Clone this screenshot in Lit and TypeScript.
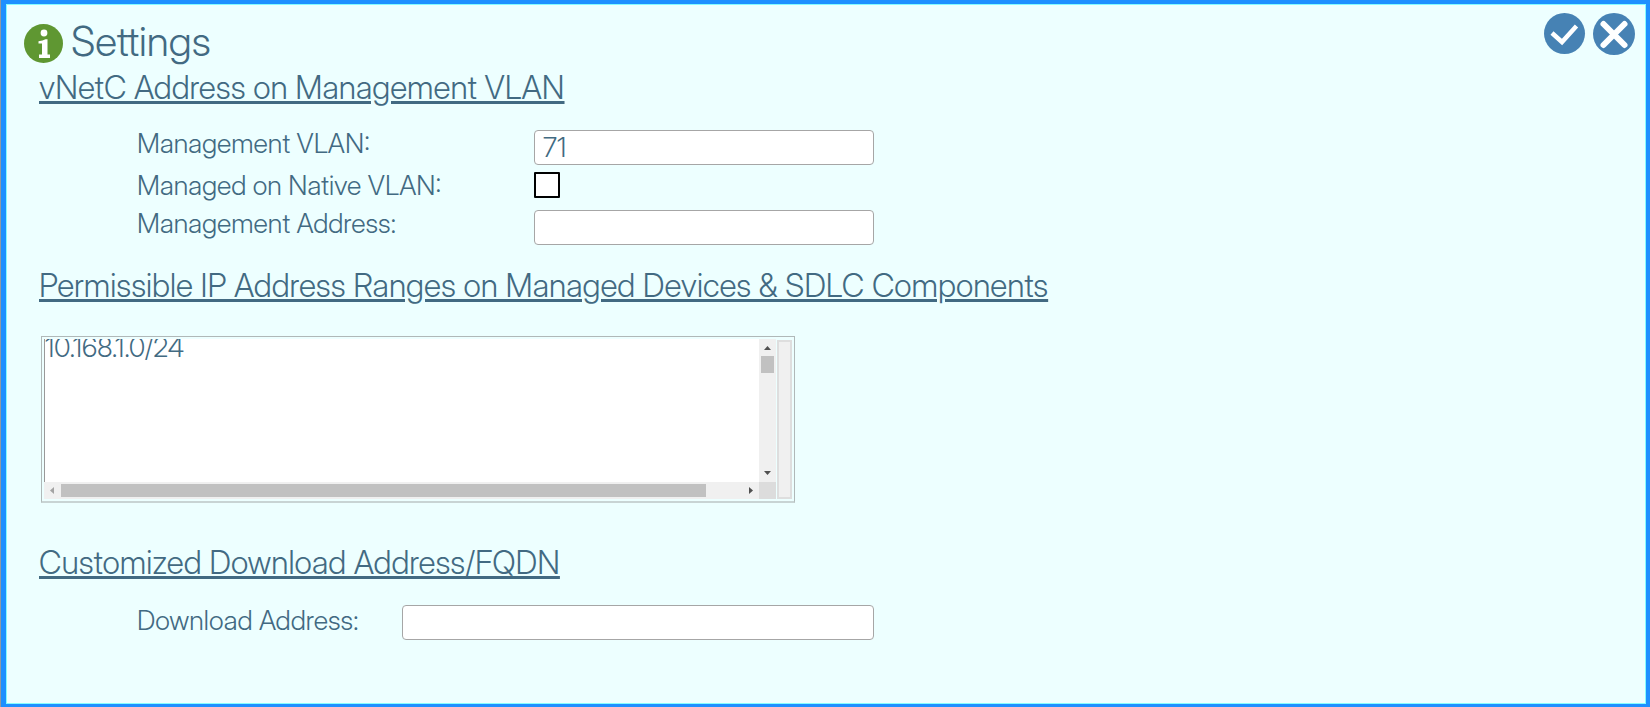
import { LitElement, html, css } from "lit";
import { customElement, state } from "lit/decorators.js";

@customElement("range-list")
class RangeList extends LitElement {
  static styles = css`
    :host {
      display: block;
    }
    .frame {
      display: grid;
      grid-template-columns: minmax(0, 1fr) 15px;
      column-gap: 1px;
      box-sizing: border-box;
      height: 167px;
      padding: 2px;
      border: 1px solid #b0b8b8;
      border-bottom: 2px solid #c8d4d4;
    }
    .view {
      display: grid;
      grid-template-columns: minmax(0, 1fr) 17px;
      grid-template-rows: minmax(0, 1fr) 17px;
    }
    .text {
      display: block;
      box-sizing: border-box;
      width: 100%;
      height: 100%;
      margin: 0;
      padding: 0;
      border: 0;
      border-left: 1px solid #999;
      border-radius: 0;
      outline: none;
      resize: none;
      overflow: hidden;
      white-space: pre;
      background: #fff;
      color: #426a82;
      font: 300 27px/18px "Inter Display", Inter, sans-serif;
    }
    .bar {
      display: flex;
      align-items: center;
      background: #f0f0f0;
    }
    .vertical {
      flex-direction: column;
    }
    .arrow {
      flex: none;
      width: 17px;
      height: 17px;
      fill: #505050;
    }
    .arrow.off {
      fill: #a3a3a3;
    }
    .thumb {
      background: #c1c1c1;
    }
    .vertical .thumb {
      width: 13px;
      height: 17px;
      margin-bottom: auto;
    }
    .track {
      flex: 1;
    }
    .horizontal .thumb {
      width: 645px;
      max-width: 95%;
      height: 13px;
    }
    .corner {
      background: #dcdcdc;
    }
    .gutter {
      box-sizing: border-box;
      margin-top: 1px;
      border: 2px solid #dedede;
      background: #f0f0f0;
    }
  `;

  render() {
    return html`
      <div class="frame">
        <div class="view">
          <textarea class="text" aria-label="Permissible IP address ranges" spellcheck="false" .value=${"10.168.1.0/24"}></textarea>
          <div class="bar vertical">
            <svg class="arrow" viewBox="0 0 17 17"><path d="M5 11 8.5 7 12 11z" /></svg>
            <div class="thumb"></div>
            <svg class="arrow" viewBox="0 0 17 17"><path d="M5 6 8.5 10 12 6z" /></svg>
          </div>
          <div class="bar horizontal">
            <svg class="arrow off" viewBox="0 0 17 17"><path d="M10 5 6 8.5 10 12z" /></svg>
            <div class="track"><div class="thumb"></div></div>
            <svg class="arrow" viewBox="0 0 17 17"><path d="M7 5 11 8.5 7 12z" /></svg>
          </div>
          <div class="corner"></div>
        </div>
        <div class="gutter"></div>
      </div>
    `;
  }
}

@customElement("app-root")
class AppRoot extends LitElement {
  static styles = css`
    :host {
      display: block;
      border-left: 1px solid #8f9aa5;
      color: #426a82;
      font: 300 27px/34px "Inter Display", Inter, sans-serif;
    }
    .panel {
      box-sizing: border-box;
      min-height: 100vh;
      padding: 9px 11px 20px 18px;
      border: solid #1e90ff;
      border-width: 4px 4px 3px 5px;
      background: #edffff;
      box-shadow: inset 0 0 0 1px #84fbff;
    }
    .header {
      display: flex;
      justify-content: space-between;
      align-items: flex-start;
      height: 55px;
    }
    .brand {
      display: flex;
      align-items: flex-start;
      gap: 8px;
      padding-top: 6px;
    }
    .info {
      width: 39px;
      height: 39px;
      margin-top: 5px;
    }
    .title {
      margin: 0;
      font-size: 41px;
      font-weight: 300;
      line-height: 44px;
    }
    .actions {
      display: flex;
      gap: 7px;
    }
    .action {
      padding: 0;
      border: 0;
      background: none;
      cursor: pointer;
    }
    .action svg {
      display: block;
      width: 42px;
      height: 42px;
    }
    .content {
      padding-left: 15px;
    }
    .heading {
      margin: 0;
      font-size: 32px;
      font-weight: 300;
      line-height: 40px;
      text-decoration: underline;
      text-decoration-thickness: 3px;
    }
    .form {
      display: grid;
      grid-template-columns: 397px minmax(0, 340px);
      row-gap: 4px;
      padding-left: 98px;
      margin: 19px 0 21px;
    }
    .download {
      grid-template-columns: 265px minmax(0, 472px);
      align-items: center;
    }
    .field {
      box-sizing: border-box;
      width: 100%;
      height: 35px;
      margin: 3px 0 0;
      padding: 0 8px;
      border: 1px solid #a6a6a6;
      border-radius: 4px;
      background: #fff;
      color: inherit;
      font: inherit;
    }
    .check {
      appearance: none;
      width: 26px;
      height: 26px;
      margin: 3px 0 5px;
      border: 2px solid #000;
      border-radius: 1px;
      background: #fff;
    }
    .check:checked {
      background: #4682b4;
    }
    .ranges {
      max-width: 754px;
      margin: 30px 0 40px 2px;
    }
  `;

  @state() private nativeVlan = false;

  render() {
    return html`
      <main class="panel">
        <header class="header">
          <div class="brand">
            <svg class="info" viewBox="0 0 39 39" aria-hidden="true">
              <circle cx="19.5" cy="19.5" r="19.5" fill="#5f9732" />
              <circle cx="20" cy="9" r="3.4" fill="#fff" />
              <path d="M14.500 17.200q4.500-.4 7-2h2v15.300h2.500v3.500h-11v-3.500h3v-11h-3.500z" fill="#fff" />
            </svg>
            <h1 class="title">Settings</h1>
          </div>
          <div class="actions">
            <button class="action" type="button" aria-label="Apply">
              <svg viewBox="0 0 42 42">
                <circle cx="20.5" cy="20.5" r="20.5" fill="#4682b4" />
                <path d="M8 20 18 29 32.500 13" fill="none" stroke="#fff" stroke-width="4.500" />
              </svg>
            </button>
            <button class="action" type="button" aria-label="Close">
              <svg viewBox="0 0 42 42">
                <circle cx="21" cy="21" r="21" fill="#4682b4" />
                <path d="M10.500 11 31.500 32M31.500 11 10.500 32" fill="none" stroke="#fff" stroke-width="6" stroke-linecap="round" />
              </svg>
            </button>
          </div>
        </header>
        <div class="content">
          <h2 class="heading">vNetC Address on Management VLAN</h2>
          <div class="form">
            <label for="vlan">Management VLAN:</label>
            <input id="vlan" class="field" type="text" value="71" />
            <label for="native">Managed on Native VLAN:</label>
            <input
              id="native"
              class="check"
              type="checkbox"
              .checked=${this.nativeVlan}
              @change=${(e: Event) => (this.nativeVlan = (e.target as HTMLInputElement).checked)}
            />
            <label for="address">Management Address:</label>
            <input id="address" class="field" type="text" />
          </div>
          <h2 class="heading">Permissible IP Address Ranges on Managed Devices &amp; SDLC Components</h2>
          <range-list class="ranges"></range-list>
          <h2 class="heading">Customized Download Address/FQDN</h2>
          <div class="form download">
            <label for="download">Download Address:</label>
            <input id="download" class="field" type="text" />
          </div>
        </div>
      </main>
    `;
  }
}
